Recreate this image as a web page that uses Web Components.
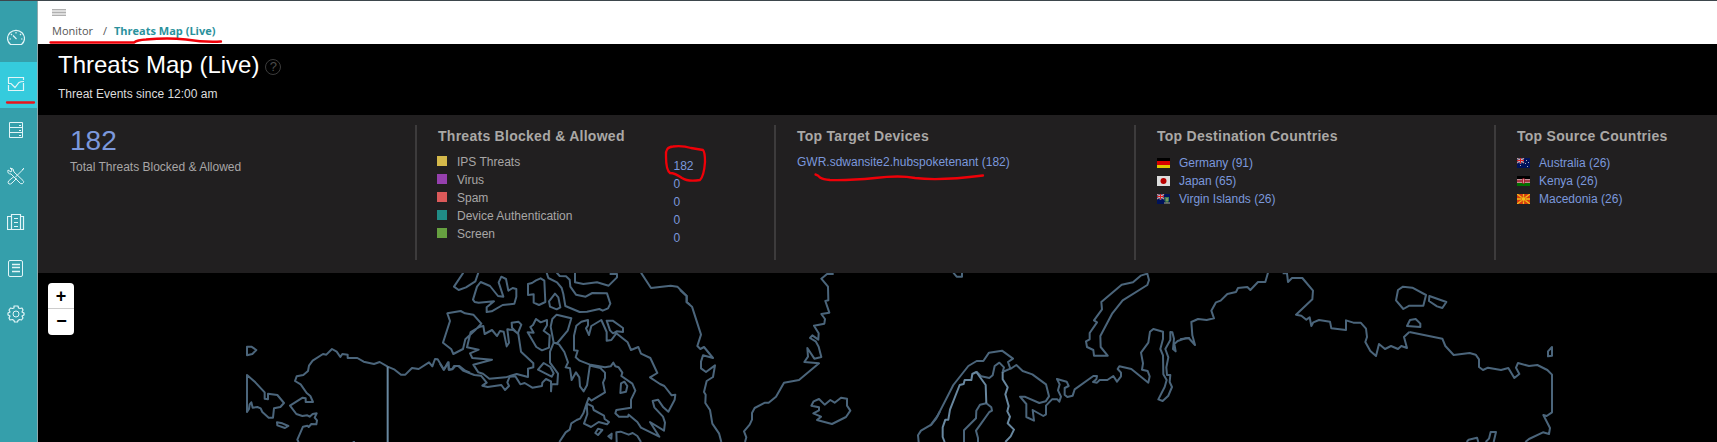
<!DOCTYPE html>
<html lang="en">
<head>
<meta charset="utf-8">
<title>Threats Map (Live)</title>
<style>
html,body{margin:0;height:100%;overflow:hidden;background:#000}
body{font:12px/18px "Liberation Sans",Arial,sans-serif}
</style>
</head>
<body>
<threat-app></threat-app>
<script>
const define=(name,html)=>customElements.define(name,class extends HTMLElement{
  constructor(){
    super();
    const t=document.createElement('template');
    t.innerHTML=html;
    this.attachShadow({mode:'open'}).append(t.content.cloneNode(true));
  }
});

define('nav-item',`<style>
:host{display:flex;height:46px;align-items:center;padding:0 0 2px 7px;box-sizing:border-box}
:host([active]){background:#35cbdd}
::slotted(svg){display:block;width:18px;height:18px;fill:none;stroke:#e2f5f7;stroke-width:1}
</style><slot></slot>`);

define('side-nav',`<style>
:host{display:block;width:37px;box-sizing:content-box;border-right:1px solid #8fa9ad;background:#359fab;padding-top:15px}
</style>
<nav-item><svg viewBox="0 0 18 18"><path d="M3.500 15.500Q.5 13 .5 9.500A8.400 8 0 0 1 17.500 9.500Q17.500 13 14.500 15.500ZM9.500 10 6 6.500M2.500 10H4M14 10H15.500M9 3V4.500M4 5L5 6M14 5L13 6" stroke-width="1.200"/></svg></nav-item>
<nav-item active><svg viewBox="0 0 18 18"><path d="M1.500 8V2.500H16.500V5M16.500 8V15.500H1.500V10M1 8.500H4L8 12.500 12 7.500Q13.500 6.500 17 6.500" stroke-width="1.200"/></svg></nav-item>
<nav-item><svg viewBox="0 0 18 18"><path d="M2.500 1.500H15.500V16.500H2.500ZM2.500 6.500H15.500M2.500 11.500H15.500M12 4.500H14M12 9.500H14M12 14.500H14"/></svg></nav-item>
<nav-item><svg viewBox="0 0 18 18"><path d="M1 3Q0 7 4 7L13.500 16.500Q15.500 17.500 16.500 15.500 17 14.500 16 13.500L7 5Q7 1 3 1L5 3 4 5ZM16.500 2L8 10.500M15 3L17 1M7 9.500L1.500 14Q.5 16 2 17 3.500 17.500 5 16L9.500 11.500"/></svg></nav-item>
<nav-item><svg viewBox="0 0 18 18"><path d="M4.500 3.500H.5V16.500H16.500V3.500H13.500M4.500 16V1.500H13.500V16M7 5.500H11M7 9.500H11M7 13.500H11" stroke-width="1.200"/></svg></nav-item>
<nav-item><svg viewBox="0 0 18 18"><rect x="1.500" y="1.500" width="14" height="16" rx="1.500"/><path d="M5 5.500H13M5 8.500H13M5 12.500H13" stroke-width="1.300"/></svg></nav-item>
<nav-item><svg viewBox="0 0 18 18"><circle cx="9" cy="9" r="3"/><path d="M7 1H11L11.500 3 13 3.500 15 3 16 5 15 7 17 8V10L15 11 16 13 14.500 15 12.500 14.500 11 15.500 10.500 17H7.500L7 15.500 5.500 14.500 3 15 2 13 3 11 1 10V8L3 7 2 5 3.500 3 5.500 3.500 7 3Z" stroke-width="1.200" stroke-linejoin="round"/></svg></nav-item>`);

define('bread-crumb',`<style>
:host{display:flex;flex-direction:column;background:#fff;height:43px;padding-left:14px;box-sizing:border-box;color:#555;font:11px/16px "Open Sans",sans-serif}
.menu{width:14px;height:7px;margin-top:8px;background:repeating-linear-gradient(#b0b0b0 0 1px,#ddd 1px 3px)}
.trail{display:flex;margin-top:7px}
.trail span:first-child{width:41px}
.sep{width:11px;margin-left:10px}
b{color:#2a919c;font-size:11px}
</style><div class="menu"></div><div class="trail"><span>Monitor</span><span class="sep">/</span><b>Threats Map (Live)</b></div>`);

define('page-title',`<style>
:host{display:block;height:71px;padding:5px 0 0 20px;box-sizing:border-box;color:#ddd}
.row{display:flex;height:31px;align-items:center}
h1{font-size:24px;line-height:30px;font-weight:400;color:#fff;margin:0}
.q{width:14px;height:14px;border:1px solid #3c3c3c;border-radius:50%;margin:4px 0 0 6px;font-size:13px;line-height:14px;text-align:center;color:#4c4c4c}
.sub{margin-top:5px}
</style><div class="row"><h1>Threats Map (Live)</h1><span class="q">?</span></div><div class="sub">Threat Events since 12:00 am</div>`);

define('stat-section',`<style>
:host{display:block;height:135px;box-sizing:border-box;border-left:2px solid #3d3b3c;padding-left:21px}
h2{margin:2px 0 0;font-size:14px;line-height:18px;letter-spacing:.27px;color:#aaa8a6;font-weight:700}
.body{padding-top:8px}
</style><h2><slot name="title"></slot></h2><div class="body"><slot></slot></div>`);

define('threat-row',`<style>
:host{display:flex;height:18px;color:#a8a6a6}
i{width:10px;height:10px;background:var(--c);margin:3px 10px 0 -1px}
.name{width:216.500px}
.n{color:#7b98dc;margin-top:4px;height:18px}
</style><i></i><span class="name"><slot></slot></span><span class="n"><slot name="count"></slot></span>`);

define('country-row',`<style>
:host{display:flex;height:18px;color:#7b98dc}
::slotted(svg){display:block;width:13px;height:10px;margin:5px 9px 0 0}
span{line-height:20px}
</style><slot name="flag"></slot><span><slot></slot></span>`);

const jack='<path fill="#00125a" d="M0 0H13V10H0Z"/><path d="M0 0 7 5M7 0 0 5" stroke="#c99" stroke-width="1.200"/><path d="M3.500 0V5.500M0 2.500H7" stroke="#edd" stroke-width="1.700"/><path d="M3.500 0V5.500M0 2.500H7" stroke="#d22" stroke-width="1"/>';

define('stats-panel',`<style>
:host{display:grid;grid-template-columns:377px 359px 360px 360px 223px;height:158px;background:#211f20;padding-top:10px;box-sizing:border-box}
.total{padding-left:32px;color:#a8a6a6}
.total b{display:block;font:28px/32px "Liberation Sans",Arial,sans-serif;color:#7b98dc;height:33px}
.dev{color:#7b98dc}
</style>
<div class="total"><b>182</b>Total Threats Blocked &amp; Allowed</div>
<stat-section><span slot="title">Threats Blocked &amp; Allowed</span>
<threat-row style="--c:#d4b84a">IPS Threats<span slot="count">182</span></threat-row>
<threat-row style="--c:#9640ae">Virus<span slot="count">0</span></threat-row>
<threat-row style="--c:#dc5a5a">Spam<span slot="count">0</span></threat-row>
<threat-row style="--c:#208c86">Device Authentication<span slot="count">0</span></threat-row>
<threat-row style="--c:#66a040">Screen<span slot="count">0</span></threat-row></stat-section>
<stat-section><span slot="title">Top Target Devices</span><div class="dev">GWR.sdwansite2.hubspoketenant (182)</div></stat-section>
<stat-section><span slot="title">Top Destination Countries</span>
<country-row><svg slot="flag" viewBox="0 0 13 10"><path d="M0 0H13V3H0Z"/><path fill="#d80000" d="M0 3H13V7H0Z"/><path fill="#e0c800" d="M0 7H13V10H0Z"/></svg>Germany (91)</country-row>
<country-row><svg slot="flag" viewBox="0 0 13 10"><path fill="#ddd" d="M0 0H13V10H0Z"/><circle cx="6.500" cy="5" r="3" fill="#b80000"/></svg>Japan (65)</country-row>
<country-row><svg slot="flag" viewBox="0 0 13 10">${jack}<path d="M7.500 3H12V7L10 9 7.500 7Z" fill="#3f7a50"/><path d="M10 4V7M7 9H13" stroke="#b8b070"/></svg>Virgin Islands (26)</country-row></stat-section>
<stat-section><span slot="title">Top Source Countries</span>
<country-row><svg slot="flag" viewBox="0 0 13 10">${jack}<path fill="#aab" d="M3 7H4V8H3ZM9 2H10V3H9ZM11 4H12V5H11ZM8 5H9V6H8ZM10 8H11V9H10Z"/></svg>Australia (26)</country-row>
<country-row><svg slot="flag" viewBox="0 0 13 10"><path d="M0 0H13V3H0Z"/><path fill="#ddd" d="M0 3H13V7H0Z"/><path fill="#a83848" d="M0 3.500H13V6.500H0Z"/><path fill="#007000" d="M0 7H13V10H0Z"/><ellipse cx="6.500" cy="5" rx="1.500" ry="3" fill="#b02030"/><path d="M6.500 3V7" stroke="#dcc" stroke-width=".7"/></svg>Kenya (26)</country-row>
<country-row><svg slot="flag" viewBox="0 0 13 10"><path fill="#d83a10" d="M0 0H13V10H0Z"/><path d="M0 0 13 10M13 0 0 10M6.500 0V10M0 5H13" stroke="#efbd18" stroke-width="1.300"/><circle cx="6.500" cy="5" r="2.200" fill="#efbd18" stroke="#d83a10" stroke-width=".5"/></svg>Macedonia (26)</country-row></stat-section>`);

define('zoom-control',`<style>
:host{display:flex;flex-direction:column;width:26px;height:52px;background:#fff;border-radius:4px;overflow:hidden}
span{height:25px;font:bold 18px/27px "Liberation Sans",Arial,sans-serif;text-align:center;color:#000}
span+span{border-top:1px solid #ccc;height:26px;line-height:25px;padding-left:1px}
</style><span>+</span><span>−</span>`);

/* Coastline tiles: every group is drawn at three units per pixel. */
define('world-map',`<style>
:host{display:block;position:relative;height:169px;overflow:hidden}
svg{display:block;width:1679px;height:169px;fill:none;stroke:#4b657b;stroke-width:6;stroke-linejoin:round}
zoom-control{position:absolute;left:10px;top:10px}
.b{stroke:#68879f}
</style>
<svg viewBox="38 273 1679 169">
<g transform="translate(220 270) scale(.33333)">
<path d="M81 230H94L109 240 97 252 81 256ZM81 315L106 337 134 367V386L144 388V371L172 375 192 399 181 411 162 415 159 443H146L127 426 122 415 112 411 98 413 94 397 89 403 87 417 81 426ZM171 457L187 460 205 468 195 474 172 466Z"/>
<path d="M236 516L232 509 249 470 262 467 266 471 274 462 289 463 291 451 284 443 290 430 278 432 269 440 262 436 247 438 229 432 210 407 248 383 257 385V396H279L271 378 260 369 242 343 225 333 230 319 250 315 264 303 267 287 278 272 309 252 319 254 336 237 350 245 361 261 367 252 383 254V264H412L431 275 462 282 479 276 503 290 524 299 543 314H556L576 294 596 297 627 277 637 289 645 267 653 268 672 299 684 277 687 299 697 298 706 288H718L736 302 750 308"/>
<path class="b" d="M503 290V516"/><path d="M398 516H405"/>
</g>
<g transform="translate(440 270) scale(.33333)">
<path d="M70 8L42 50 56 60 78 52 106 34 115 8M104 96L99 89 111 50 122 36 150 48 174 78 190 80 176 37 184 20 198 27 205 62 218 54 229 57V80L223 101 188 105 155 124 140 126V112L162 94 116 98ZM264 75V42L276 39 288 31 302 25 313 32 316 96 297 105 281 98V73ZM345 71L355 82 361 112 350 118 330 110 327 94ZM320 8L325 24 351 37 365 54 370 72 376 108 419 126 441 125 478 117 488 122 504 115 511 101 501 70 457 69 437 80 408 74 391 50 389 29 378 19 359 18 350 8M405 8V37L430 42 471 37 506 47 531 22V12H509"/>
<path d="M22 130L62 123 75 130 100 134 124 161 105 181 76 208 69 237 40 252 34 238 9 218 30 153ZM130 168L120 170 92 186 81 232 116 239 90 250 97 264 156 269 100 284 115 307 129 311 148 326 197 322 230 312 264 321V296L280 292V280L243 245 235 192 220 180 202 178 207 218 200 229 191 185 180 183 171 198 156 180 134 192ZM215 158L235 155 244 164 233 191 216 173ZM279 165L288 147 302 157 321 150V166L311 182 329 196 327 233 306 241 289 231 263 187 281 188 271 171ZM350 134L394 145 383 182 352 219 341 218 332 170 337 147Z"/>
<path d="M341 218L330 245V278L354 311 352 343 335 342 333 364V334L318 327 307 338 306 348 277 353 254 339 241 343 226 319 209 320 202 337 207 348 195 360 184 345 143 351 127 347 140 338 123 317 103 315 69 302 55 288H42L37 297 26 299V277L11 299 0 281M311 279L331 291 341 310 335 320 294 299ZM341 218L357 223 373 246 384 277 377 292 390 295 395 330 408 307 418 322 420 349 431 364 441 346 450 284 419 272 407 262 413 242 402 241V197L409 167 424 155 444 150V166L438 175 447 195 454 168 484 150 500 186V212L514 210 529 190 563 217 573 240 595 231 603 251 631 264 652 309 630 322 660 342 673 348 695 376 706 374 704 389 685 425 670 412 654 389 638 393 643 412 669 440 675 458 672 482 630 456 658 500 603 473 592 456 566 434 564 440H537L526 430 529 420 573 413V389L586 362 577 341 544 318 547 308 536 292 526 289 520 278 512 289 495 292 452 284M500 152H518L549 174V186L530 184 519 190 510 181ZM452 287L481 294 495 308V324L489 338 495 367 454 392 446 384 440 400 430 430 420 446 410 450 394 460 389 479 377 487 358 516M440 400L458 409 461 420 492 437 494 447 507 456 501 463 476 456 453 471 432 461 442 432ZM553 335L562 348 558 365 541 369 543 340ZM487 480L474 495 466 489 474 476ZM515 491L514 506 505 499ZM530 516L529 487 542 485 566 494 578 489 592 498 603 516M603 8L633 54 692 47 712 50 740 78V96L750 104"/>
</g>
<g transform="translate(680 270) scale(.33333)">
<path d="M0 60L20 78V97L36 110 63 194 52 228 61 237 72 231 99 264 69 256 63 275V295L78 306 105 286 99 321 80 333 72 366 77 374 76 399 90 420 97 461 117 490 124 516M195 516L199 502 192 484 209 464 216 449V429L224 414 255 398H266L288 380 312 338 357 330 417 280 373 276 384 260 382 234 403 266 424 261 416 230 407 214 390 204 397 196 415 209 416 190 402 167 433 161 435 147 424 132 448 128 436 93 445 91 444 50 424 26 441 12H461M394 407L401 394 417 387 434 404 451 390 464 398 483 383 501 386V407L511 422 498 441 456 462 411 450 423 440 400 430 417 421V412ZM716 516L714 496 723 482 754 464 769 445 780 424"/>
</g>
<g transform="translate(930 270) scale(.33333)">
<path d="M70 8L80 20H96V8M0 468L23 437 70 345 115 288 140 273H160L177 248 216 242 249 266 234 276 241 296 218 306 222 292 208 278 194 288 188 316 178 324 154 319 139 304M102 516V481L138 445 139 422 150 404 169 400 184 412 186 422 178 426 151 464 138 482 144 504V516M241 297L259 285 278 303 307 313 348 343 357 379 347 394 328 399 284 380H270L289 402V441L312 452 308 420 340 438 348 433V407L366 388H382L388 395 393 380 384 361 389 343 381 327 410 335 416 348 404 354V374L412 381 428 377 434 358 490 318H501L499 328 489 336 501 338 509 330H532L550 318 561 335 573 319V308L563 297 568 289 604 297 655 338 659 319 653 303 636 299 639 280 633 248 655 218 660 185 670 177 699 185V207L691 237 699 256 700 313 710 330 704 351 685 388 698 393 715 377 726 351 719 336 721 315H711L709 292 715 262 706 237 721 210V186L727 187 732 206 729 237 737 244 733 222 743 213 766 205H780M492 257L490 240 471 231 468 214 479 208V189L501 157 492 151 516 118 514 96 575 44 609 37 632 17 652 11 657 30 652 45 578 91 547 130 511 198 512 231 533 257Z"/>
<path class="b" d="M44 516L38 501V472L46 449H55L60 419 89 345 101 342 104 330H124L127 312 139 306 167 345 169 400M218 306V328L233 352 226 373 236 408 232 424 240 440 233 460 252 479 242 499 226 516"/>
</g>
<g transform="translate(1180 270) scale(.33333)">
<path d="M0 208L26 204 45 225 37 196 34 156 54 147 80 150 102 145 94 122 108 97 122 92 142 72 168 66 174 54 202 51 211 60 234 36H256L264 8M308 10H321L324 36 336 24H367L399 62 397 88 348 134 364 137 379 149 389 142 394 168 400 157 417 150 450 155 454 175 498 180V151L520 158H542L558 176 561 201 556 216 571 243 588 258 597 222 615 237 633 228 654 237 664 228 681 234 672 201 688 186"/>
</g>
<g transform="translate(1350 270) scale(.33333)">
<path d="M144 60L159 50 187 53 228 75 220 107H178L160 117 138 91ZM238 78L289 96 277 114 261 109 237 93ZM171 168L180 150 197 147 211 161V171ZM178 186L277 206 286 228 311 255 359 249 377 254 387 268V291L399 300 414 293 453 300 475 294 493 324 508 312 498 293 504 279 537 288 562 285 592 300 606 314V427L590 438 580 435 600 474 597 492 579 487 537 507 526 516M606 231V257L594 259V244ZM350 516L356 509 381 503 385 516M407 516L417 506 422 486H438L431 516"/>
</g>
</svg><zoom-control></zoom-control>`);

define('pen-marks',`<style>
:host{position:absolute;inset:0;pointer-events:none}
svg{display:block;fill:none;stroke:#f00008;stroke-width:2.300;stroke-linecap:round;stroke-linejoin:round}
</style><svg width="1717" height="442" viewBox="0 0 1717 442">
<path d="M50.500 42.500H134Q137 40 146 39.500 168 37.500 186 39.500 205 42.500 221 41.500"/>
<path d="M7 102.500H34" stroke="#e8151c"/>
<path d="M670 173Q666 170 666 156 665 147 673 146.500 683 145.500 691 148L703 150Q705 152 705 162 704 176 700 180 688 182 682 178 675 173 670 173Z"/>
<path d="M815.500 174.500Q818 175 820 177.500 823 179.500 830 180 850 180.500 875 178 900 175 915 178 940 181 983 175.500"/>
</svg>`);

define('threat-app',`<style>
:host{display:flex;position:relative;height:442px;width:1717px;box-sizing:border-box;border-top:1px solid #3d464c;background:#000;overflow:hidden}
main{width:1679px}
pen-marks{top:-1px}
</style><side-nav></side-nav><main><bread-crumb></bread-crumb><page-title></page-title><stats-panel></stats-panel><world-map></world-map></main><pen-marks></pen-marks>`);
</script>
</body>
</html>
